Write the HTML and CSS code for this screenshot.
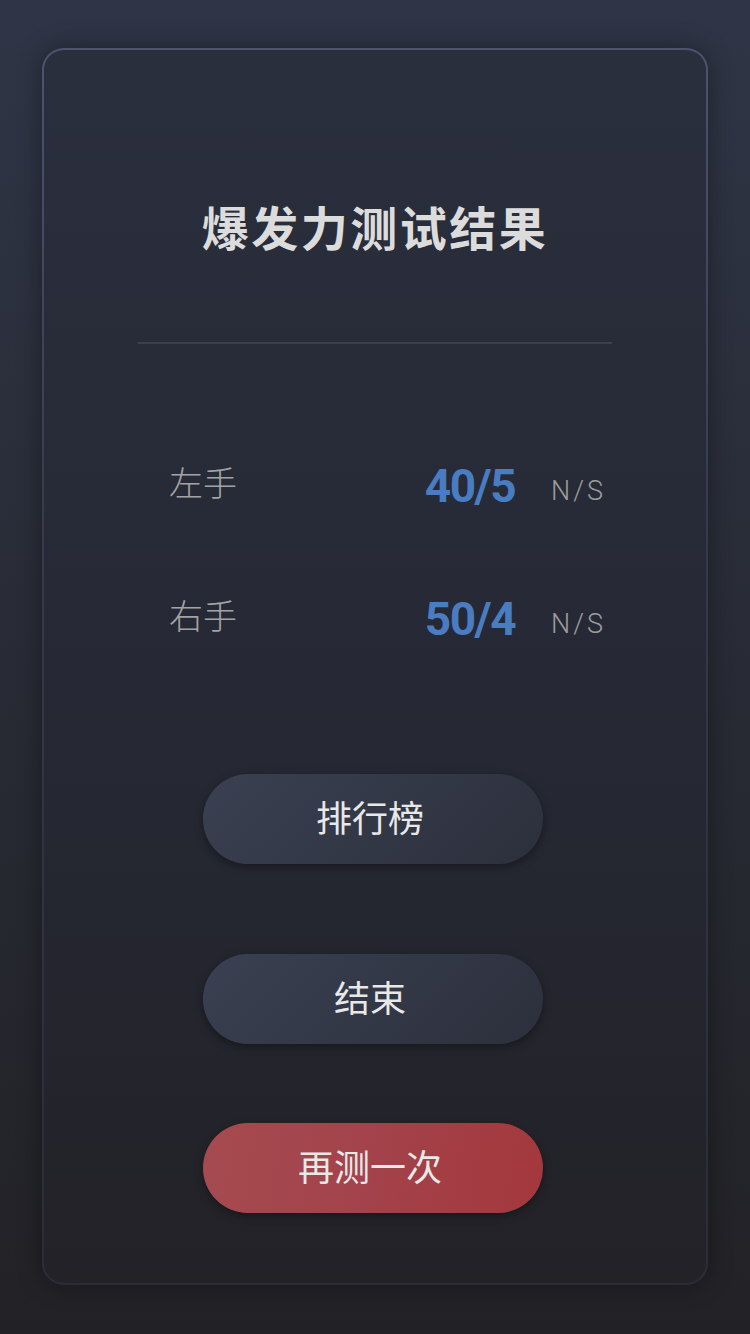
FILE: index.html
```html
<!DOCTYPE html>
<html lang="zh">
<head>
<meta charset="utf-8">
<title>爆发力测试结果</title>
<link rel="stylesheet" href="styles.css">
</head>
<body>
<main class="card">
  <h1 class="title">爆发力测试结果</h1>
  <div class="divider"></div>
  <section class="results">
    <div class="row">
      <span class="label">左手</span>
      <span class="value">40/5</span>
      <span class="unit">N/S</span>
    </div>
    <div class="row">
      <span class="label">右手</span>
      <span class="value">50/4</span>
      <span class="unit">N/S</span>
    </div>
  </section>
  <div class="actions">
    <button class="btn btn-dark btn-rank">排行榜</button>
    <button class="btn btn-dark btn-end">结束</button>
    <button class="btn btn-red">再测一次</button>
  </div>
</main>
</body>
</html>
```

FILE: styles.css
```css
html, body {
  margin: 0;
  padding: 0;
}
body {
  width: 750px;
  height: 1334px;
  background: linear-gradient(180deg, #2f3546 0%, #272a33 55%, #222226 100%);
  font-family: "Noto Sans CJK SC", "Noto Sans", sans-serif;
  overflow: hidden;
  padding-top: 48px;
  box-sizing: border-box;
}
.card {
  box-sizing: border-box;
  width: 666px;
  height: 1237px;
  margin: 0 0 0 42px;
  border-radius: 22px;
  border: 2px solid transparent;
  background:
    linear-gradient(180deg, #2a2f3d 0%, #262935 50%, #222227 100%) padding-box,
    linear-gradient(180deg, #4d546c 0%, #353a4a 40%, #2a2d38 100%) border-box;
  box-shadow: 0 0 24px rgba(0, 0, 0, 0.35);
  display: flex;
  flex-direction: column;
  align-items: center;
  padding: 145px 94px 0;
}
.title {
  margin: 0;
  font-size: 47px;
  line-height: 62px;
  font-weight: 700;
  letter-spacing: 2.5px;
  color: #dcdcdc;
}
.divider {
  width: 474px;
  height: 2px;
  background: #3b404d;
  margin-top: 85px;
}
.results {
  width: 474px;
  margin-top: 111px;
  display: flex;
  flex-direction: column;
  gap: 73px;
}
.row {
  height: 60px;
  display: flex;
  align-items: center;
  padding: 0 9px 0 31px;
}
.label {
  font-size: 34px;
  font-weight: 300;
  color: #a3a3a3;
  flex: 1;
  position: relative;
  top: -4px;
}
.value {
  font-family: "Roboto", "Liberation Sans", sans-serif;
  font-weight: 700;
  font-size: 46px;
  letter-spacing: -1.5px;
  color: #4a7cc2;
  margin-right: 36px;
  position: relative;
  top: 1px;
}
.unit {
  font-family: "Roboto", "Liberation Sans", sans-serif;
  font-weight: 300;
  font-size: 27px;
  letter-spacing: 3px;
  margin-right: -3px;
  color: #9c9c9c;
  position: relative;
  top: 6px;
}
.actions {
  margin-top: 126px;
  margin-right: 4px;
  display: flex;
  flex-direction: column;
  align-items: center;
}
.btn {
  width: 340px;
  height: 90px;
  border: none;
  border-radius: 45px;
  font-family: "Noto Sans CJK SC", "Noto Sans", sans-serif;
  font-size: 36px;
  font-weight: 400;
  color: #e8e8e8;
  padding: 0 6px 6px 0;
  box-shadow: 0 3px 8px rgba(0, 0, 0, 0.35);
}
.btn-dark {
  background: linear-gradient(135deg, #3b4052 0%, #333847 50%, #2c303c 100%);
}
.btn-end {
  margin-top: 90px;
}
.btn-red {
  margin-top: 79px;
  background: linear-gradient(100deg, #a54b50 0%, #a3424a 50%, #a3383c 100%);
}
```
